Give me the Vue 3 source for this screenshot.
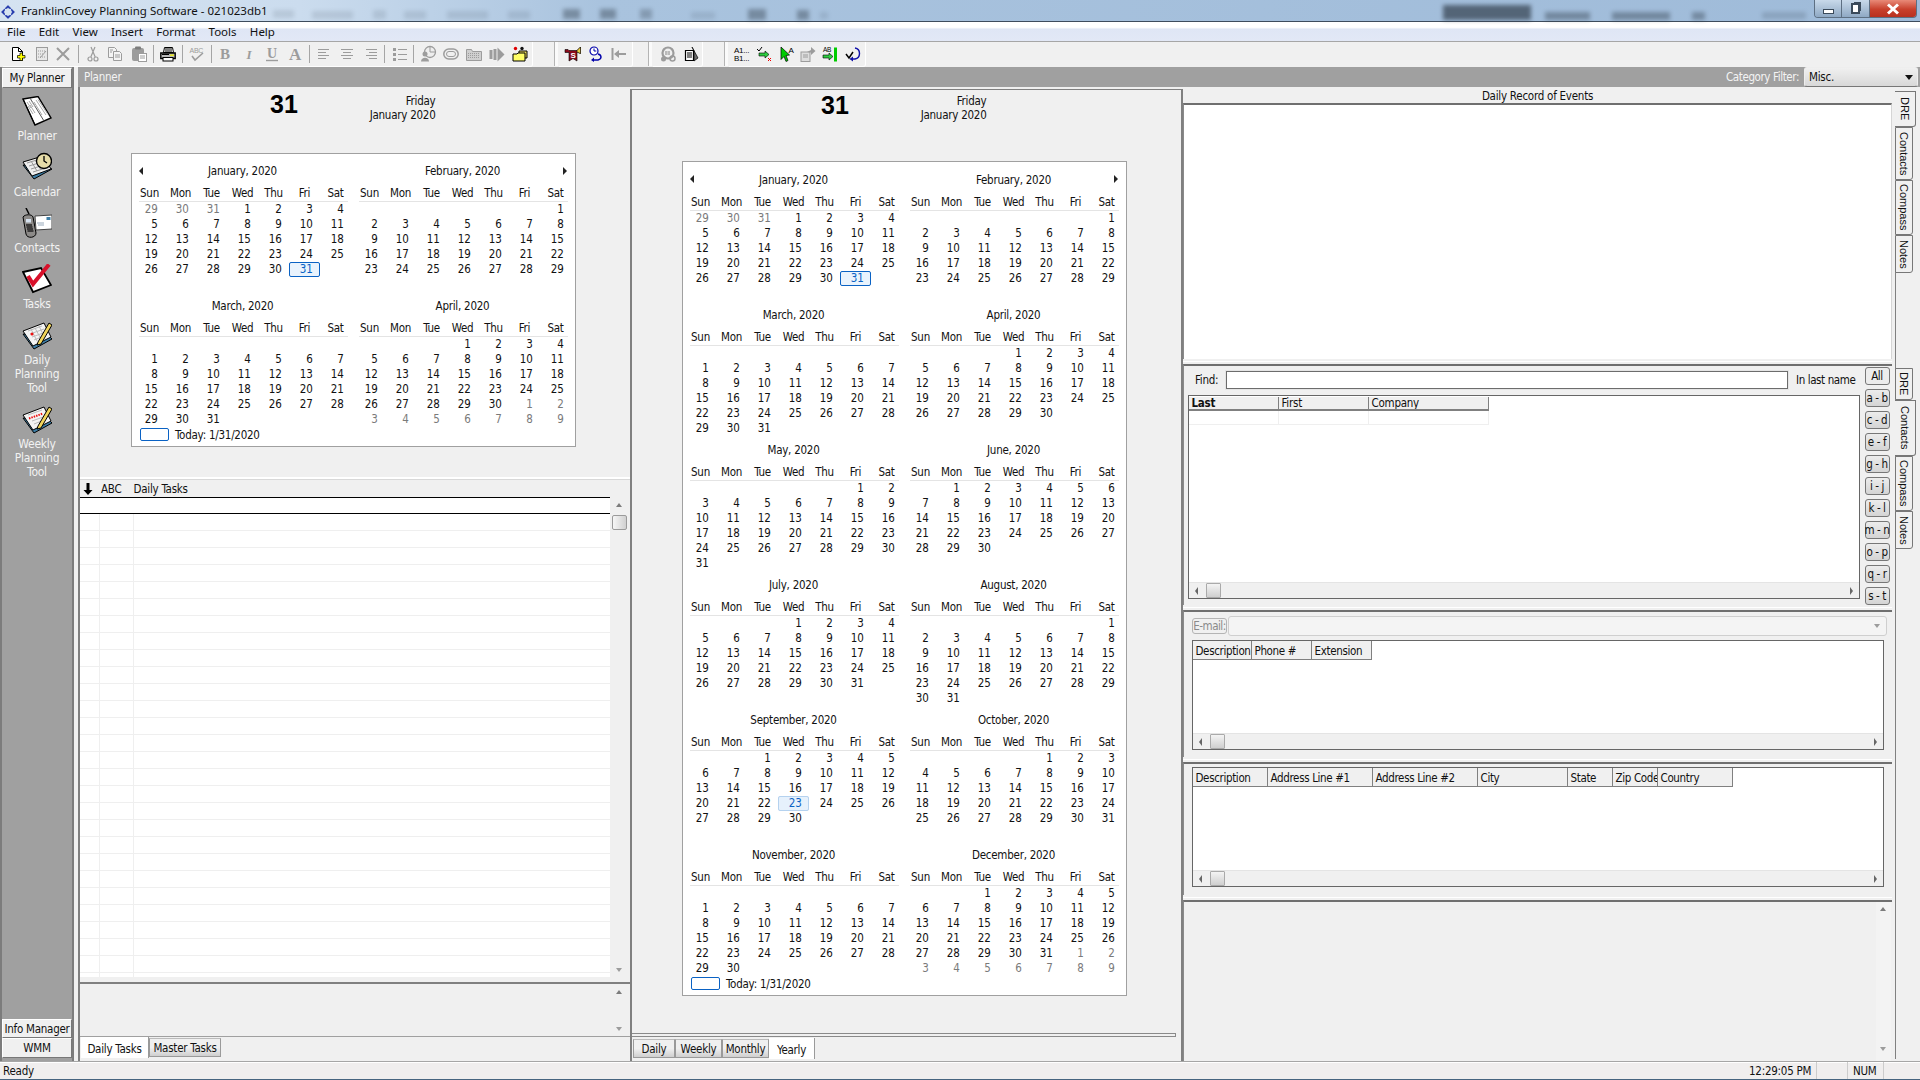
<script setup>
const G = '#9c9c9c'
const L = 'font-family="Liberation Sans"'
const S = 'font-family="Liberation Serif"'
const icons = {
  new: `<path d="M2.5 1.5h6l4 4v9h-10z" fill="#fff" stroke="#000"/><path d="M8.5 1.5v4h4" fill="none" stroke="#000"/><path d="M10 7h2.5v2.5H15V12h-2.5v2.5H10V12H7.5V9.5H10z" fill="#ff0" stroke="#000" stroke-width=".7"/>`,
  edit: `<rect x="2.5" y="1.5" width="11" height="13" fill="#e8e8e8" stroke="${G}"/><path d="M4 5h8M4 8h6M4 11h7" stroke="${G}" stroke-dasharray="1 1"/><path d="M6 12l6-7" stroke="${G}"/>`,
  x: `<path d="M2 2l12 12M14 2L2 14" stroke="${G}" stroke-width="2" fill="none"/>`,
  cut: `<circle cx="5" cy="13" r="2" fill="none" stroke="${G}" stroke-width="1.2"/><circle cx="11" cy="13" r="2" fill="none" stroke="${G}" stroke-width="1.2"/><path d="M5.8 11L10 1M10.2 11L6 1" stroke="${G}" stroke-width="1.2"/>`,
  copy: `<path d="M1.5 1.5h6l2 2v8h-8z" fill="#f4f4f4" stroke="${G}"/><path d="M6.5 5.5h6l2 2v7h-8z" fill="#f4f4f4" stroke="${G}"/><path d="M8 9h5M8 11h5M3 4h3M3 6h2" stroke="${G}"/>`,
  paste: `<rect x="1" y="2" width="12" height="13" rx="2" fill="${G}"/><rect x="4" y=".5" width="6" height="3" rx="1" fill="#7c7c7c"/><rect x="7.5" y="7.5" width="8" height="8" fill="#fff" stroke="${G}"/><path d="M9 10h5M9 12h5" stroke="${G}"/>`,
  print: `<path d="M4.5 1.5h8l1 5h-10z" fill="#fff" stroke="#000"/><path d="M5 3h7M5 5h7" stroke="#000"/><path d="M.8 7h14.4v5.5H.8z" fill="#bbb" stroke="#000" stroke-width="1.4"/><rect x="3" y="11.5" width="10" height="3.5" fill="#fff" stroke="#000"/><rect x="10" y="8.5" width="4" height="1.3" fill="#ee0"/><path d="M2 8.5h7" stroke="#000"/>`,
  spell: `<text x=".5" y="6.5" font-size="7" fill="${G}" ${L}>ABC</text><path d="M3 10l3 4 8-7" fill="none" stroke="${G}" stroke-width="1.6"/>`,
  b: `<text x="8" y="13" text-anchor="middle" ${S} font-weight="700" font-size="15" fill="${G}">B</text>`,
  i: `<text x="8" y="12.5" text-anchor="middle" ${S} font-style="italic" font-weight="700" font-size="13" fill="${G}">I</text>`,
  u: `<text x="8" y="12" text-anchor="middle" ${S} font-weight="700" font-size="14" fill="${G}">U</text><path d="M2 14.5h12" stroke="${G}" stroke-width="1.4"/>`,
  a: `<text x="8" y="14" text-anchor="middle" ${S} font-weight="700" font-size="17" fill="${G}">A</text>`,
  al: `<path d="M2 3.5h11M2 6.5h8M2 9.5h11M2 12.5h8" stroke="${G}" stroke-width="1.2"/>`,
  ac: `<path d="M2 3.5h12M4 6.5h8M2 9.5h12M4 12.5h8" stroke="${G}" stroke-width="1.2"/>`,
  ar: `<path d="M3 3.5h11M6 6.5h8M3 9.5h11M6 12.5h8" stroke="${G}" stroke-width="1.2"/>`,
  list: `<rect x="1" y="2" width="3" height="3" fill="${G}"/><rect x="1" y="7" width="3" height="3" fill="${G}"/><rect x="1" y="12" width="3" height="3" fill="${G}"/><path d="M6 3.5h9M6 8.5h9M6 13.5h9" stroke="${G}" stroke-width="1.2"/>`,
  pie: `<circle cx="10" cy="6" r="5.5" fill="#eee" stroke="${G}" stroke-width="1.3"/><path d="M10 6V1M10 6h5" stroke="${G}"/><circle cx="5" cy="8" r="2.5" fill="${G}"/><path d="M1 15.5c0-5 8-5 8 0z" fill="${G}"/>`,
  cap: `<rect x=".8" y="3" width="14.4" height="10" rx="5" fill="none" stroke="${G}" stroke-width="1.5"/><rect x="3.5" y="5.5" width="9" height="5" rx="2.5" fill="none" stroke="${G}"/>`,
  fold: `<path d="M.5 3.5h5l1 2h9v9H.5z" fill="#cfcfcf" stroke="${G}"/><path d="M2 7.5h12M2 9.5h12M2 11.5h12" stroke="${G}" stroke-dasharray="1 1"/>`,
  go: `<rect x=".5" y="4" width="3" height="9" fill="${G}"/><rect x="4.5" y="3" width="3" height="11" fill="${G}"/><path d="M8.5 1.5l7 7-7 7z" fill="${G}"/>`,
  col: `<circle cx="3.5" cy="2.5" r="1.7" fill="#d00"/><circle cx="10" cy="2.5" r="1.7" fill="#111"/><path d="M7 5h8v7H7z" fill="#e8d95a" stroke="#000"/><path d="M1 8h4l1-1h7v8H1z" fill="#ff6" stroke="#000"/>`,
  flag: `<path d="M0 3.5h3l1 1h8l3.5-3.5v6.5L12 6v9l-4-2.5L4 15V6.5H0z" fill="#8a0a1a" stroke="#000" stroke-width=".6"/><path d="M12 4.5L15.5 1v6.5L12 6z" fill="#e8d040" stroke="#000" stroke-width=".5"/><text x="8" y="11.5" text-anchor="middle" font-size="8" font-weight="700" fill="#fff" ${L}>S</text>`,
  clock: `<circle cx="6" cy="5" r="4" fill="#fff" stroke="#00a" stroke-width="1.2"/><path d="M6 2.5V5h2.3" stroke="#00a" fill="none"/><path d="M10 8c4 1 4 5 0 6H5" stroke="#00a" fill="none" stroke-width="1.4"/><path d="M6 11.5L3 14l3 2z" fill="#00a"/>`,
  back: `<path d="M1.5 2v12" stroke="${G}" stroke-width="2"/><path d="M3 8l5-4v3h7v2H8v3z" fill="${G}"/>`,
  gear: `<circle cx="8" cy="7" r="5.5" fill="none" stroke="${G}" stroke-width="2.2"/><circle cx="12.5" cy="12.5" r="2.5" fill="none" stroke="${G}" stroke-width="1.5"/><circle cx="3.5" cy="13" r="2.5" fill="${G}"/><path d="M6 5v4M9 5v4M5 6h5M5 8h5" stroke="${G}" stroke-width=".8"/>`,
  bell: `<path d="M2.5 4.5h8v10h-8z" fill="#fff" stroke="#000" stroke-width="1.2"/><path d="M4 7h5M4 9h5M4 11h5" stroke="#000"/><path d="M9 1l6 11-4 3V5z" fill="#6b6b6b" stroke="#000" stroke-width=".7"/>`,
  ab: `<text x="0" y="7" font-size="8" fill="#000" ${L}>A1...</text><text x="0" y="15" font-size="8" fill="#000" ${L}>B1...</text>`,
  mv: `<path d="M1 3l2 2 3-4" stroke="#000" fill="none"/><path d="M3 7h6V5l4 3.5-4 3.5v-2H3z" fill="#2ecc40" stroke="#000" stroke-width=".6"/><path d="M12 12l3 3M15 12l-3 3" stroke="#e00"/>`,
  cur: `<path d="M2 1l8.5 8-3.5.5 2 5-2 1-2-5-3 3z" fill="#0c0" stroke="#000" stroke-width=".7"/><text x="9.5" y="7" font-size="8" fill="#000" ${L}>A</text>`,
  sh: `<rect x="1" y="6" width="9" height="9.5" fill="#ddd" stroke="${G}"/><path d="M3 9h5M3 11h5" stroke="${G}"/><path d="M7 6l4-2V1l4.5 4-4.5 4V6.5z" fill="${G}"/>`,
  abb: `<text x="1" y="6" font-size="6.5" fill="#000" ${L}>AB</text><path d="M1 9h6V7l4 3.5L7 14v-2H1z" fill="#2ecc40" stroke="#000" stroke-width=".6"/><rect x="12" y="1.5" width="3" height="14" fill="#0c0"/>`,
  und: `<path d="M1 8l3 4 4-6" stroke="#000" fill="none" stroke-width="1.5"/><path d="M10 2c6 1 6 10 0 11H7" stroke="#11a" fill="none" stroke-width="1.4"/><path d="M8 10.5L4.5 13 8 15.5z" fill="#11a"/>`
}

function seq(items) {
  let prev = items.x0
  return items.list.map(([k, c]) => {
    const w = k === 'sep' ? 1 : 16
    const ml = c - w / 2 - prev
    prev = c + w / 2
    return { k, ml }
  })
}
const bands = [
  { x0: 3, x1: 533, list: [['new',18],['edit',42],['x',63],['sep',78],['cut',93],['copy',115],['paste',139],['sep',153],['print',168],['sep',182],['spell',197],['sep',211],['b',225],['i',249],['u',272],['a',295],['sep',309],['al',324],['ac',347],['ar',371],['sep',384],['list',400],['sep',413],['pie',428],['cap',451],['fold',474],['go',497],['col',520]] },
  { x0: 559, x1: 633, list: [['flag',573],['clock',596],['back',619]] },
  { x0: 653, x1: 703, list: [['gear',668],['bell',691]] },
  { x0: 729, x1: 866, list: [['ab',742],['mv',764],['cur',787],['sh',808],['abb',830],['und',853]] }
].map((b, i, arr) => ({
  w: b.x1 - b.x0,
  gap: i === 0 ? b.x0 : b.x0 - arr[i - 1].x1,
  items: seq(b)
}))

const smudges = [
  [273,21,10,8],[312,41,11,8],[373,13,10,9],[404,22,11,8],[447,41,11,8],[508,22,11,8],[563,17,9,10,.42],[600,16,9,10,.42],
  [640,12,9,10,.3],[691,24,12,7],[748,18,9,11,.42],[797,12,10,10,.42],[820,8,12,7],
  [1443,88,5,15,.7],[1545,45,12,8,.42],[1612,58,12,8,.42],[1692,13,12,8,.4],[1762,44,12,7,.2]
].map(([x,w,y,h,o]) => ({ left: x + 'px', width: w + 'px', top: y + 'px', height: h + 'px', opacity: o || .13 }))

const sideIcons = {
  planner: `<path d="M1 3L16 .5 29 22 13 29z" fill="#fff" stroke="#000" stroke-width="1.4"/><path d="M13 29L1 3" stroke="#000"/><path d="M8 2l14 23" stroke="#555"/><path d="M5 6l4 6M7 5l4 6M9 4.500l4 6M6 10l5 8M8 9l5 8M14 4l10 15M16 3.500l10 15M12 6l8 13" stroke="#aaa"/>`,
  calendar: `<path d="M1 13L12 27 30 17 19 15z" fill="#3d7ea6" stroke="#000"/><path d="M1 10L21 4 29 17 10 24z" fill="#eee" stroke="#000"/><path d="M5 11l13-4M7 14l13-4M9 17l13-4M11 20l13-4M9 9l6 10M13 8l6 10M17 7l6 10" stroke="#999"/><circle cx="22" cy="9" r="7.500" fill="#e6dca8" stroke="#000" stroke-width="1.3"/><path d="M22 4v5l3 2" stroke="#000" fill="none" stroke-width="1.300"/>`,
  contacts: `<path d="M4 0l3 6" stroke="#000" stroke-width="1.500"/><path d="M1 9c2-3 9-3 10 0l3 16c0 5-9 6-10 1z" fill="#8c8a88" stroke="#000"/><rect x="4" y="11" width="5" height="3.500" fill="#d5e1ef"/><path d="M4 17h6M4.500 19h6M5 21h6M5.500 23h6" stroke="#222" stroke-width="1.300"/><path d="M13 8l17-1v14l-16 1z" fill="#fff" stroke="#444"/><path d="M15 15h7M16 17h6" stroke="#9ab"/><rect x="24.500" y="9" width="4" height="3" fill="#3d7ea6"/>`,
  tasks: `<path d="M1 8l18-4 10 17-18 7z" fill="#fff" stroke="#000" stroke-width="1.800"/><path d="M6 12l5 8L27 .5" fill="none" stroke="#d8102a" stroke-width="4"/>`,
  daily: `<path d="M1 14L12 29 30 19 27 16z" fill="#3d7ea6" stroke="#000"/><path d="M1 11L22 3 29 17 11 26z" fill="#f4f4f4" stroke="#000"/><path d="M6 11l14-5M8 14l14-5M10 17l14-5M12 20l10-4M9 9l6 12M13 8l6 11M17 6l5 10" stroke="#bbb"/><circle cx="10" cy="14" r="1.500" fill="#e11"/><path d="M16 22L27 3l3 2-11 19-4 1z" fill="#f0d45a" stroke="#000"/>`,
  weekly: `<path d="M1 14L12 29 30 19 27 16z" fill="#3d7ea6" stroke="#000"/><path d="M1 11L22 3 29 17 11 26z" fill="#f4f4f4" stroke="#000"/><path d="M6 11l14-5M10 17l14-5M12 20l10-4" stroke="#bbb"/><path d="M7 14.500l14-5" stroke="#e11" stroke-width="2" stroke-dasharray="1.500 1"/><path d="M16 22L27 3l3 2-11 19-4 1z" fill="#f0d45a" stroke="#000"/>`
}
const sideItems = [
  { k: 'planner', lines: ['Planner'] },
  { k: 'calendar', lines: ['Calendar'] },
  { k: 'contacts', lines: ['Contacts'] },
  { k: 'tasks', lines: ['Tasks'] },
  { k: 'daily', lines: ['Daily', 'Planning', 'Tool'] },
  { k: 'weekly', lines: ['Weekly', 'Planning', 'Tool'] }
]

const names = ['January','February','March','April','May','June','July','August','September','October','November','December']
const week = ['Sun','Mon','Tue','Wed','Thu','Fri','Sat']
function month(m, withPrev, withNext, hover) {
  const first = new Date(2020, m, 1).getDay()
  const lead = first === 0 ? 7 : first
  const len = new Date(2020, m + 1, 0).getDate()
  const prevLen = new Date(2020, m, 0).getDate()
  const cells = []
  for (let i = 0; i < 42; i++) {
    const d = i - lead + 1
    let n = '', dim = false
    if (d < 1) { if (withPrev) { n = prevLen + d; dim = true } }
    else if (d > len) { if (withNext) { n = d - len; dim = true } }
    else n = d
    cells.push({
      n, dim,
      today: m === 0 && d === 31,
      hover: hover && m === 8 && d === 23
    })
  }
  return { title: names[m] + ', 2020', cells }
}
const leftMonths = [0,1,2,3].map(m => month(m, m === 0, m === 3, false))
const centerMonths = Array.from({ length: 12 }, (_, m) => month(m, m === 0, m === 11, true))
const rows = Array.from({ length: 28 }, (_, i) => i)
const alpha = ['a - b','c - d','e - f','g - h','i - j','k - l','m - n','o - p','q - r','s - t']
const menus = ['File','Edit','View','Insert','Format','Tools','Help']
const tabs1 = [['DRE',36,1],['Contacts',53,0],['Compass',55,0],['Notes',38,0]]
const tabs2 = [['DRE',32,0],['Contacts',56,1],['Compass',55,0],['Notes',38,0]]
const phoneCols = [['Description',59],['Phone #',60],['Extension',60]]
const addrCols = [['Description',75],['Address Line #1',105],['Address Line #2',105],['City',90],['State',45],['Zip Code',45],['Country',75]]
</script>

<template>
  <div class="app">
    <header class="title">
      <i v-for="(s, i) in smudges" :key="i" class="smudge" :style="s"></i>
      <svg class="appicon" viewBox="0 0 14 14">
        <path d="M7 .5L10 3.500H8.500L7 2.500 5.500 3.500H4zM13.500 7L10.500 10V8.500L11.500 7 10.500 5.500V4zM7 13.500L4 10.500H5.500L7 11.500 8.500 10.500H10zM.5 7L3.500 4V5.500L2.500 7 3.500 8.500V10z" fill="#1a2fa8" stroke="#1a2fa8" stroke-width=".6"/>
      </svg>
      <span class="title-text">FranklinCovey Planning Software - 021023db1</span>
      <div class="winbtns">
        <div class="wb wb-min"><i></i></div>
        <div class="wb wb-max"><i></i></div>
        <div class="wb wb-close">
          <svg viewBox="0 0 14 12" width="14" height="12"><path d="M2 1.500L12 10.500M12 1.500L2 10.500" stroke="#fff" stroke-width="3"/></svg>
        </div>
      </div>
    </header>

    <nav class="menu"><span v-for="m in menus" :key="m">{{ m }}</span></nav>

    <div class="toolbar">
      <div v-for="(b, bi) in bands" :key="bi" class="band" :class="{ first: bi === 0 }" :style="{ marginLeft: b.gap + 'px', width: b.w + 'px' }">
        <template v-for="(it, ii) in b.items" :key="ii">
          <i v-if="it.k === 'sep'" class="tsep" :style="{ marginLeft: it.ml + 'px' }"></i>
          <svg v-else class="tico" viewBox="0 0 16 16" :style="{ marginLeft: it.ml + 'px' }" v-html="icons[it.k]"></svg>
        </template>
      </div>
    </div>

    <div class="main">
      <aside class="side">
        <div class="side-col">
          <div class="side-btn sb-top">My Planner</div>
          <div class="side-items">
            <div v-for="it in sideItems" :key="it.k" class="side-item">
              <svg viewBox="0 0 30 30" class="side-ico" v-html="sideIcons[it.k]"></svg>
              <span v-for="l in it.lines" :key="l">{{ l }}</span>
            </div>
          </div>
          <div class="side-btn sb-im">Info Manager</div>
          <div class="side-btn sb-wmm">WMM</div>
        </div>
      </aside>

      <div class="work">
        <div class="graybar">
          <span class="gb-title">Planner</span>
          <span class="gb-filter">Category Filter:</span>
          <div class="gb-select"><span>Misc.</span><i class="tri-d dark"></i></div>
        </div>

        <div class="panes">
          <!-- left -->
          <section class="pane-left">
            <div class="upper">
              <div class="dayhead">
                <div class="daynum">31</div>
                <div class="daydate"><div>Friday</div><div>January 2020</div></div>
              </div>
              <div class="cal cal-left">
                <i class="cal-arrow prev"></i><i class="cal-arrow next"></i>
                <div class="cal-grid">
                  <div v-for="mo in leftMonths" :key="mo.title" class="mo">
                    <div class="mo-title">{{ mo.title }}</div>
                    <div class="mo-head"><span v-for="w in week" :key="w">{{ w }}</span></div>
                    <div class="mo-days">
                      <span v-for="(c, i) in mo.cells" :key="i" :class="{ dim: c.dim, today: c.today, hover: c.hover }">{{ c.n }}</span>
                    </div>
                  </div>
                </div>
                <div class="cal-today"><i></i><span>Today: 1/31/2020</span></div>
              </div>
            </div>
            <div class="split-light"></div>
            <div class="task-head">
              <svg viewBox="0 0 10 14" width="10" height="14"><path d="M3.500 1h3v7H9.500L5 13 .5 8h3z" fill="#000"/></svg>
              <span class="th-abc">ABC</span><span class="th-dt">Daily Tasks</span>
            </div>
            <div class="task-grid">
              <div class="task-table">
                <div class="task-hdr"></div>
                <div v-for="r in rows" :key="r" class="task-row"><i></i><i></i><i></i></div>
              </div>
              <div class="vscroll">
                <i class="tri-u"></i>
                <div class="vthumb"></div>
                <div class="grow"></div>
                <i class="tri-d"></i>
              </div>
            </div>
            <div class="notes">
              <div class="grow"></div>
              <div class="vscroll plain"><i class="tri-u"></i><div class="grow"></div><i class="tri-d"></i></div>
            </div>
            <div class="tabs">
              <div class="tab active">Daily Tasks</div>
              <div class="tab w72">Master Tasks</div>
            </div>
          </section>

          <!-- center -->
          <section class="pane-center">
            <div class="dayhead c">
              <div class="daynum">31</div>
              <div class="daydate"><div>Friday</div><div>January 2020</div></div>
            </div>
            <div class="cal cal-center">
              <i class="cal-arrow prev"></i><i class="cal-arrow next"></i>
              <div class="cal-grid">
                <div v-for="mo in centerMonths" :key="mo.title" class="mo">
                  <div class="mo-title">{{ mo.title }}</div>
                  <div class="mo-head"><span v-for="w in week" :key="w">{{ w }}</span></div>
                  <div class="mo-days">
                    <span v-for="(c, i) in mo.cells" :key="i" :class="{ dim: c.dim, today: c.today, hover: c.hover }">{{ c.n }}</span>
                  </div>
                </div>
              </div>
              <div class="cal-today"><i></i><span>Today: 1/31/2020</span></div>
            </div>
            <div class="grow"></div>
            <div class="view-line"></div>
            <div class="tabs ctabs">
              <div class="tab w41">Daily</div>
              <div class="tab w47">Weekly</div>
              <div class="tab w47">Monthly</div>
              <div class="tab active w46">Yearly</div>
            </div>
          </section>

          <!-- right -->
          <section class="pane-right">
            <div class="right-main">
              <div class="dre-title">Daily Record of Events</div>
              <div class="dre-body"></div>
              <div class="rgap"></div>

              <div class="sec sec-find">
                <div class="find-left">
                  <div class="find-row">
                    <label>Find:</label>
                    <div class="find-input"></div>
                    <span>In last name</span>
                  </div>
                  <div class="list">
                    <div class="hdr">
                      <div class="hc bold w91">Last</div>
                      <div class="hc w90">First</div>
                      <div class="hc w120">Company</div>
                    </div>
                    <div class="lrow"><i class="w91"></i><i class="w90"></i><i class="w120"></i></div>
                    <div class="grow"></div>
                    <div class="hscroll">
                      <i class="tri-l"></i><div class="hthumb"></div><div class="grow"></div><i class="tri-r"></i>
                    </div>
                  </div>
                </div>
                <div class="alpha">
                  <div class="abtn all">All</div>
                  <div v-for="a in alpha" :key="a" class="abtn">{{ a }}</div>
                </div>
              </div>
              <div class="rgap"></div>

              <div class="sec sec-phone">
                <div class="mail-row">
                  <div class="mail-btn">E-mail:</div>
                  <div class="mail-combo"><i class="tri-d"></i></div>
                </div>
                <div class="tbl t-phone">
                  <div class="hdr tall">
                    <div v-for="c in phoneCols" :key="c[0]" class="hc" :style="{ width: c[1] + 'px' }">{{ c[0] }}</div>
                  </div>
                  <div class="grow"></div>
                  <div class="hscroll"><i class="tri-l"></i><div class="hthumb"></div><div class="grow"></div><i class="tri-r"></i></div>
                </div>
              </div>
              <div class="rgap"></div>

              <div class="sec sec-addr">
                <div class="tbl t-addr">
                  <div class="hdr tall">
                    <div v-for="c in addrCols" :key="c[0]" class="hc" :style="{ width: c[1] + 'px' }">{{ c[0] }}</div>
                  </div>
                  <div class="grow"></div>
                  <div class="hscroll"><i class="tri-l"></i><div class="hthumb"></div><div class="grow"></div><i class="tri-r"></i></div>
                </div>
              </div>
              <div class="rgap"></div>

              <div class="sec sec-last">
                <div class="grow"></div>
                <div class="vscroll lastv"><i class="tri-u"></i><div class="grow"></div><i class="tri-d"></i></div>
              </div>
            </div>

            <div class="strip">
              <div class="vtabs g1">
                <div v-for="t in tabs1" :key="t[0]" class="vtab" :class="{ on: t[2] }" :style="{ height: t[1] + 'px' }"><span>{{ t[0] }}</span></div>
              </div>
              <div class="vtabs g2">
                <div v-for="t in tabs2" :key="t[0]" class="vtab" :class="{ on: t[2] }" :style="{ height: t[1] + 'px' }"><span>{{ t[0] }}</span></div>
              </div>
            </div>
          </section>
        </div>
      </div>
    </div>

    <footer class="status">
      <span class="st-ready">Ready</span>
      <span class="st-time">12:29:05 PM</span>
      <span class="st-empty"></span>
      <span class="st-num">NUM</span>
    </footer>
  </div>
</template>

<style>
html, body { margin: 0; overflow: hidden; background: #f0f0f0; }
</style>

<style scoped>
* { box-sizing: border-box; }
.app {
  width: 1920px; height: 1080px; overflow: hidden; display: flex; flex-direction: column;
  font-family: "DejaVu Sans Condensed", "Liberation Sans", sans-serif;
  font-size: 11.5px; color: #111; background: #f0f0f0; letter-spacing: -.25px;
}
.grow { flex: 1; min-height: 0; min-width: 0; }

.title {
  position: relative; height: 22px; flex: none; display: flex; align-items: center;
  background: linear-gradient(90deg, #d5e3f1 0, #cbdcee 300px, #a9c3de 600px, #9fbbd9 100%);
  border-bottom: 1px solid #3e4c5c;
}
.smudge { position: absolute; background: #33404e; filter: blur(2px); }
.appicon { width: 14px; height: 14px; margin: 2px 0 0 1px; position: relative; }
.title-text { margin-left: 6px; font: 11.5px "Noto Sans", sans-serif; letter-spacing: 0; position: relative; color: #111; }
.winbtns { position: absolute; right: 3px; top: 0; display: flex; height: 18px; border: 1px solid #5d6f82; border-top: 0; border-radius: 0 0 4px 4px; overflow: hidden; }
.wb { display: flex; align-items: center; justify-content: center; height: 100%; }
.wb-min { width: 27px; background: linear-gradient(#c8d9ea, #8fa9c4); border-right: 1px solid #5d6f82; }
.wb-min i { width: 11px; height: 5px; margin-top: 5px; background: #fff; border: 1px solid #3a4a5a; }
.wb-max { width: 28px; background: linear-gradient(#c8d9ea, #8fa9c4); border-right: 1px solid #5d6f82; }
.wb-max i { width: 9px; height: 11px; background: #fff; border: 2px solid #3a4a5a; box-shadow: 2px -2px 0 -1px #3a4a5a; }
.wb-close { width: 46px; background: linear-gradient(#e88a78, #c8402c 55%, #b8301f); }

.menu {
  height: 20px; flex: none; display: flex; align-items: center; padding-left: 7px;
  font: 11.5px "Noto Sans", sans-serif; letter-spacing: 0;
  background: linear-gradient(#fff, #fff 28%, #dfe6f5 38%, #e2e8f6 100%);
  border-bottom: 1px solid #a6a6a6; color: #111;
}
.menu span { margin-right: 13.3px; }

.toolbar { height: 25px; flex: none; display: flex; align-items: center; background: #f0f0f0; }
.band { height: 25px; display: flex; align-items: center; flex: none; border-right: 1px solid #fff; border-bottom: 1px solid #fdfdfd; border-radius: 0 0 3px 0; position: relative; }
.band:not(.first)::before { content: ""; position: absolute; left: -5px; top: 0; bottom: 0; width: 3px; background: #fafafa; border-left: 1px solid #b4b4b4; }
.tico { width: 16px; height: 16px; flex: none; overflow: visible; }
.tsep { width: 1px; height: 18px; flex: none; background: #a5a5a5; }

.main { flex: 1; min-height: 0; display: flex; }
.side { width: 78px; flex: none; background: #f0f0f0; display: flex; }
.side-col { width: 74px; background: #a0a0a0; border-left: 2px solid #7c7c7c; border-right: 2px solid #7c7c7c; display: flex; flex-direction: column; padding-bottom: 3px; }
.side-btn { flex: none; display: flex; align-items: center; justify-content: center; background: #f0f0f0; color: #111; margin-left: 0; border: 1px solid #fff; border-right-color: #777; border-bottom-color: #777; }
.sb-top { height: 20px; margin-top: 1px; }
.sb-im { height: 19px; }
.sb-wmm { height: 20px; }
.side-items { flex: 1; padding-top: 8px; color: #f2f2f2; display: flex; flex-direction: column; align-items: center; }
.side-item { display: flex; flex-direction: column; align-items: center; margin-bottom: 9px; font-size: 12px; }
.side-ico { width: 30px; height: 30px; margin-bottom: 3px; flex: none; }
.side-item span { height: 14px; line-height: 14px; }

.work { flex: 1; min-width: 0; display: flex; flex-direction: column; }
.graybar { height: 20px; flex: none; background: #a0a0a0; color: #f4f4f4; display: flex; align-items: center; padding-left: 6px; }
.gb-title { flex: 1; }
.gb-filter { margin-right: 5px; letter-spacing: -.4px; }
.gb-select { width: 114px; height: 20px; margin-right: 2px; border: 1px solid #eee; border-bottom-color: #777; border-radius: 3px; background: linear-gradient(#f0f0f0, #d8d8d8); color: #111; display: flex; align-items: center; justify-content: space-between; padding: 0 4px; }

.panes { flex: 1; min-height: 0; display: flex; }

.pane-left { width: 552px; flex: none; display: flex; flex-direction: column; border-left: 2px solid #808080; }
.upper { height: 390px; flex: none; }
.dayhead { height: 66px; display: flex; padding-top: 2px; }
.daynum { width: 48px; margin-left: 180px; text-align: center; font: 700 25px/30px "Liberation Sans", sans-serif; color: #000; letter-spacing: 0; }
.daydate { width: 127.5px; text-align: right; padding-top: 5px; line-height: 13.5px; }
.dayhead.c { height: 70.5px; padding-top: 0; }
.dayhead.c .daynum { margin-left: 179px; }
.dayhead:not(.c) .daydate { padding-top: 6px; }

.cal { position: relative; background: #fff; border: 1px solid #a0a0a0; width: 445px; padding: 7px 0 0 2px; flex: none; }
.cal-left { margin-left: 51px; height: 294px; }
.cal-center { margin-left: 50px; height: 835px; padding-top: 8.5px; }
.cal-grid { display: grid; grid-template-columns: 220px 220px; row-gap: 3.5px; }
.mo { width: 217px; }
.mo-title { height: 22px; line-height: 22px; text-align: center; position: relative; top: -1px; }
.mo-head { height: 19px; display: grid; grid-template-columns: repeat(7, 31px); padding-top: 2px; line-height: 17px; text-align: center; position: relative; }
.mo-head::after { content: ""; position: absolute; left: 5px; right: 3px; bottom: 0; height: 1px; background: #e4e4e4; }
.mo-days { display: grid; grid-template-columns: repeat(7, 31px); grid-auto-rows: 15.08px; line-height: 15px; margin-top: 0; }
.mo-days span { text-align: right; padding-right: 7.5px; position: relative; }
.dim { color: #7a7a7a; }
.today { background: #e9f3fd; outline: 1px solid #0a62c4; outline-offset: -1px; border-radius: 2px; color: #0a62c4; }
.hover { background: #e6f1fc; outline: 1px solid #b5d2ef; outline-offset: -1px; border-radius: 2px; color: #0a62c4; }
.cal-today { display: flex; align-items: center; height: 13px; margin: 1px 0 0 6px; }
.cal-today i { width: 29px; height: 13px; border: 1px solid #0a62c4; border-radius: 2px; margin-right: 6px; }
.cal-arrow { position: absolute; top: 13px; width: 0; height: 0; border: 4px solid transparent; }
.cal-arrow.prev { left: 7px; border-left: 0; border-right: 4px solid #222; }
.cal-arrow.next { right: 8px; border-right: 0; border-left: 4px solid #222; }

.split-light { height: 3px; flex: none; background: #fff; border-bottom: 1px solid #d8d8d8; }
.task-head { height: 17px; flex: none; display: flex; align-items: center; padding-left: 3px; }
.th-abc { margin-left: 8px; }
.th-dt { margin-left: 12px; }
.task-grid { height: 480px; flex: none; display: flex; }
.task-table { width: 530px; flex: none; background: #fff; overflow: hidden; }
.task-hdr { height: 17px; background: #fff; border-top: 1px solid #000; border-bottom: 1px solid #000; }
.task-row { height: 17px; display: flex; border-bottom: 1px solid #efefef; }
.task-row i { display: block; height: 100%; border-right: 1px solid #efefef; }
.task-row i:nth-child(1) { width: 20px; }
.task-row i:nth-child(2) { width: 34px; }
.task-row i:nth-child(3) { flex: 1; border-right: 0; }
.vscroll { width: 18px; flex: none; display: flex; flex-direction: column; align-items: center; padding: 6px 0 5px; background: #f0f0f0; }
.vthumb { width: 15px; height: 15px; margin-top: 8px; border: 1px solid #9a9a9a; border-radius: 2px; background: linear-gradient(90deg, #f6f6f6, #d0d0d0); }
.tri-u { width: 0; height: 0; border: 3.5px solid transparent; border-top: 0; border-bottom: 4px solid #7c7c7c; flex: none; }
.tri-d { width: 0; height: 0; border: 3.5px solid transparent; border-bottom: 0; border-top: 4px solid #9c9c9c; flex: none; }
.tri-d.dark { border-top-color: #111; border-width: 5px 4px 0; }
.tri-l { width: 0; height: 0; border: 4px solid transparent; border-left: 0; border-right: 3px solid #666; flex: none; margin-left: 6px; }
.tri-r { width: 0; height: 0; border: 4px solid transparent; border-right: 0; border-left: 3px solid #666; flex: none; margin-right: 6px; }
.notes { flex: none; display: flex; border-top: 2px solid #808080; border-bottom: 1px solid #a0a0a0; margin-top: 5px; height: 55px; }
.notes .vscroll { margin-right: 2px; }

.tabs { height: 21px; flex: none; display: flex; padding-left: 1px; }
.tab { width: 72px; height: 19px; margin-top: 1px; display: flex; align-items: center; justify-content: center; background: linear-gradient(#f0f0f0, #f0f0f0 50%, #cfcfcf); border: 1px solid #9a9a9a; border-top-color: #bbb; }
.tab.active { width: 68px; height: 21px; margin-top: 0; background: #fff; border: 0; border-right: 1px solid #9a9a9a; padding-top: 3px; }
.tab.w72 { width: 72px; }
.tab.w41 { width: 42px; }
.tab.w47 { width: 47px; }
.tab.active.w46 { width: 46px; }

.pane-center { width: 553px; flex: none; margin-top: 2px; height: 972px; display: flex; flex-direction: column; border: 2px solid #808080; border-bottom: 0; border-top-width: 1px; }
.view-line { height: 4px; margin-right: 5px; flex: none; border: 1px solid #8a8a8a; border-left: 0; }
.ctabs { height: 24px; padding-top: 1px; padding-left: 1px; }

.pane-right { flex: 1; min-width: 0; display: flex; margin-top: 2px; }
.right-main { width: 709px; flex: none; display: flex; flex-direction: column; }
.dre-title { height: 14px; line-height: 14px; text-align: center; flex: none; }
.dre-body { height: 256px; flex: none; background: #fff; border-top: 2px solid #6f6f6f; border-left: 1px solid #8a8a8a; border-right: 1px solid #d5d5d5; }
.rgap { height: 5px; flex: none; background: linear-gradient(#f0f0f0 40%, #fff 40%, #fff 60%, #f0f0f0 60%); }
.sec { flex: none; border-top: 2px solid #6f6f6f; border-left: 1px solid #8a8a8a; background: #f0f0f0; position: relative; display: flex; }
.sec-find { height: 241px; overflow: hidden; }
.find-left { width: 675.5px; padding-left: 4px; flex: none; display: flex; flex-direction: column; }
.find-row { height: 29px; flex: none; display: flex; align-items: center; padding-bottom: 1px; }
.find-row label { width: 38px; padding-left: 7px; }
.find-input { width: 562px; height: 18px; background: #fff; border: 1px solid #6c6c6c; box-shadow: 0 0 0 1px #e4e4e4; }
.find-row span { margin-left: 8px; letter-spacing: -.4px; }
.list { height: 204px; flex: none; width: 671.5px; background: #fff; border: 1px solid #666; display: flex; flex-direction: column; }
.hdr { display: flex; flex: none; height: 14px; margin-top: 1px; }
.hdr.tall { height: 19px; margin-top: 0; }
.hc { background: #f0f0f0; border-right: 1px solid #808080; border-bottom: 1px solid #808080; padding-left: 2.5px; overflow: hidden; white-space: nowrap; display: flex; align-items: center; flex: none; }
.hdr.tall .hc { padding-top: 2px; letter-spacing: -.35px; }
.hdr:not(.tall) .hc { border-bottom-width: 2px; }
.bold { font-weight: 700; }
.w91 { width: 90px; } .w90 { width: 90px; } .w120 { width: 120px; }
.lrow { display: flex; height: 14px; flex: none; }
.lrow i { display: block; border-right: 1px solid #efefef; border-bottom: 1px solid #efefef; }
.hscroll { height: 16px; flex: none; background: #f0f0f0; display: flex; align-items: center; border-top: 1px solid #e4e4e4; }
.hthumb { width: 15px; height: 15px; margin-left: 8px; border: 1px solid #aaa; border-radius: 1px; background: linear-gradient(#f4f4f4, #cfcfcf); flex: none; }
.alpha { width: 25px; margin-left: 5px; padding-top: 1px; flex: none; display: flex; flex-direction: column; }
.abtn { height: 17.5px; margin-bottom: 4.5px; flex: none; display: flex; align-items: center; justify-content: center; white-space: nowrap; letter-spacing: -.4px; border: 1px solid #777; border-radius: 3px; background: linear-gradient(#ececec, #d4d4d4); }
.abtn.all { background: #ececec; }

.sec-phone { height: 147px; flex-direction: column; padding-left: 8px; }
.mail-row { height: 28px; flex: none; display: flex; align-items: center; }
.mail-btn { width: 35px; height: 16px; display: flex; align-items: center; justify-content: center; white-space: nowrap; letter-spacing: -.5px; border: 1px solid #b4b4b4; border-radius: 3px; color: #8a8a8a; }
.mail-combo { width: 659px; height: 20px; margin-left: 1px; border: 1px solid #cfcfcf; border-radius: 3px; background: #f4f4f4; display: flex; align-items: center; justify-content: flex-end; padding-right: 6px; }
.tbl { width: 692px; background: #fff; border: 1px solid #666; display: flex; flex-direction: column; flex: none; }
.t-phone { height: 110px; }
.sec-addr { height: 133px; padding: 3px 0 0 8px; }
.t-addr { height: 120px; }
.sec-last { height: 161px; }
.vscroll.lastv { width: 15px; height: 100%; margin-right: 1.5px; padding: 5px 0 10px; background: #f3f3f3; margin-left: auto; }
.sec-last .grow { flex: 1; }

.strip { flex: 1; position: relative; padding-left: 3px; }
.strip::before { content: ""; position: absolute; left: 3px; top: 160px; bottom: 2px; width: 1px; background: #808080; }
.vtabs { position: relative; display: flex; flex-direction: column; align-items: flex-start; }
.g1 { margin-top: 2px; }
.g2 { margin-top: 95px; }
.vtab { width: 18px; border: 1px solid #777; border-radius: 0 0 3px 0; display: flex; align-items: center; justify-content: center; background: #f0f0f0; font: 11px "Liberation Sans", sans-serif; letter-spacing: 0; }
.vtab span { writing-mode: vertical-rl; white-space: nowrap; }
.vtab.on { width: 21px; border-left: 0; }

.status { height: 19px; flex: none; display: flex; align-items: center; background: #f0eeee; border-top: 1px solid #a6a6a6; border-bottom: 1px solid #47647f; box-shadow: inset 0 1px 0 #fff; }
.st-ready { margin-left: 3px; flex: 1; }
.st-time { width: 68px; height: 100%; border-right: 1px solid #ccc; display: flex; align-items: center; }
.st-empty { width: 31px; height: 100%; border-right: 1px solid #ccc; }
.st-num { width: 36px; height: 100%; margin-right: 36px; border-right: 1px solid #ccc; display: flex; align-items: center; padding-left: 5px; }
</style>
